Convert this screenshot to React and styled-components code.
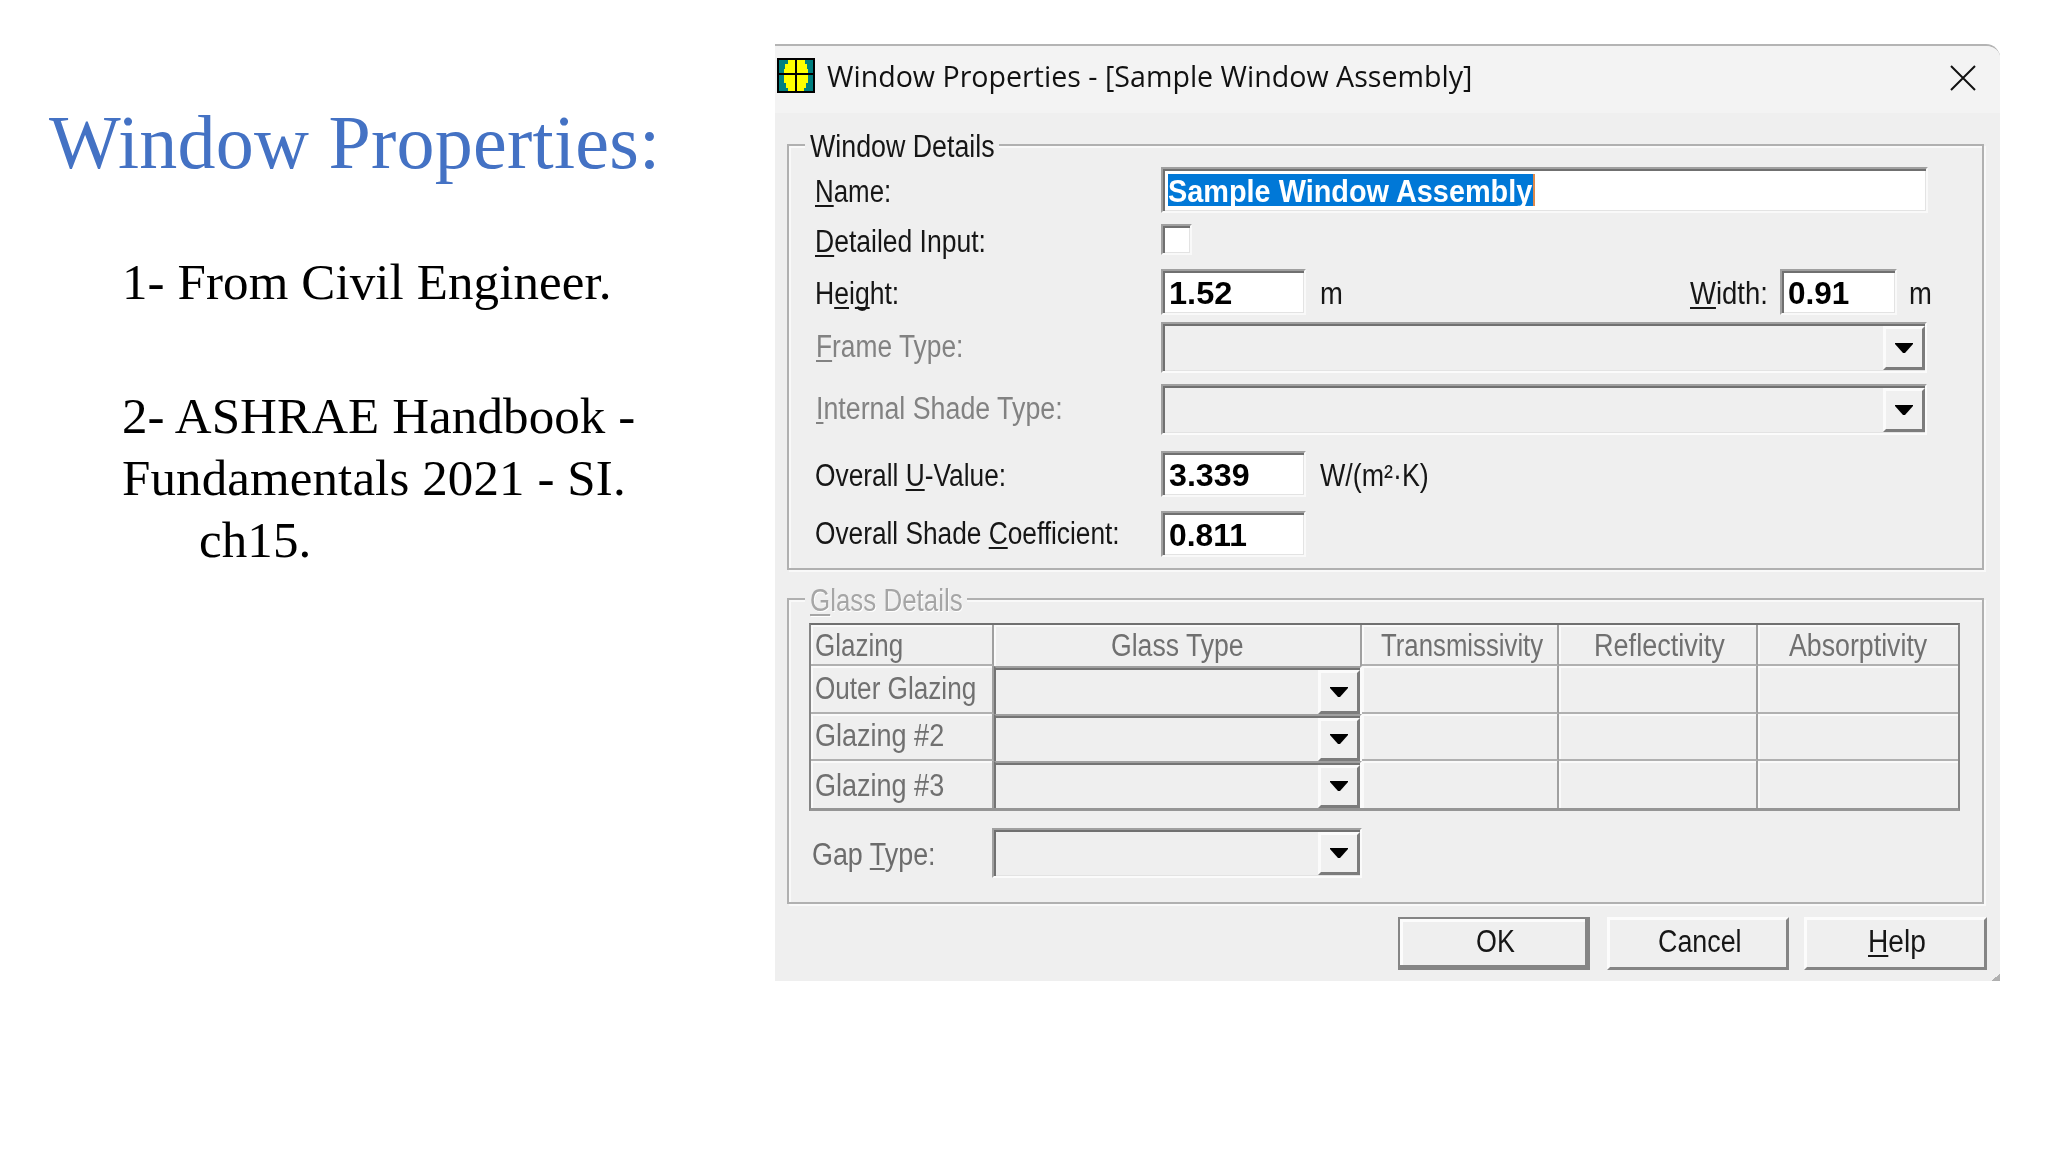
import { useLayoutEffect, useRef, useState } from "react";
import styled, { createGlobalStyle, css } from "styled-components";

// scales its text horizontally so that it fills the given width
function FitText({ width, children }) {
    const ref = useRef(null);
    const [scale, setScale] = useState(1);

    useLayoutEffect(() => {
        setScale(width / ref.current.offsetWidth);
    }, [width]);

    return (
        <FitBox $width={width}>
            <FitInner ref={ref} style={{ transform: `scaleX(${scale})` }}>
                {children}
            </FitInner>
        </FitBox>
    );
}

function Combo({ width, height, inCell }) {
    return (
        <ComboBox $width={width} $height={height} $inCell={inCell}>
            <ComboButton>
                <svg width="18" height="11" viewBox="0 0 18 11">
                    <path d="M0 0H18V1L10 10H8L0 1Z" fill="#000" />
                </svg>
            </ComboButton>
        </ComboBox>
    );
}

function WindowIcon() {
    return (
        <svg width="38" height="35" viewBox="0 0 38 35">
            <rect width="38" height="35" fill="#000" />
            <rect x="2" y="2" width="34" height="31" fill="#007f80" />
            <path
                d="M11 2H28V6H30V11H31V25H29V30H27V33H11V30H9V25H7V11H8V6H11Z"
                fill="#ffff00"
            />
            <path d="M19 0V35M0 16H38" stroke="#000" strokeWidth="2" />
        </svg>
    );
}

const glazingRows = [
    { name: "Outer Glazing", width: 161, shift: 4 },
    { name: "Glazing #2", width: 129, shift: 3 },
    { name: "Glazing #3", width: 129, shift: 6 },
];

export default function App() {
    return (
        <Slide>
            <GlobalStyle />
            <Notes>
                <Title>Window Properties:</Title>
                <Note>1- From Civil Engineer.</Note>
                <Note>
                    2- ASHRAE Handbook -<br />
                    Fundamentals 2021 - SI.
                    <Indented>ch15.</Indented>
                </Note>
            </Notes>

            <Dialog>
                <TitleBar>
                    <WindowIcon />
                    <Caption>
                        <FitText width={645}>
                            Window Properties - [Sample Window Assembly]
                        </FitText>
                    </Caption>
                    <svg width="26" height="26" viewBox="0 0 26 26">
                        <path
                            d="M1 1L25 25M25 1L1 25"
                            stroke="#111"
                            strokeWidth="2"
                        />
                    </svg>
                </TitleBar>

                <Body>
                    <Group $height={426}>
                        <Legend>
                            <FitText width={185}>Window Details</FitText>
                        </Legend>
                        <Row $gap={3}>
                            <Label>
                                <FitText width={76}>
                                    <u>N</u>ame:
                                </FitText>
                            </Label>
                            <Field $width={767}>
                                <Selection>
                                    <FitText width={364}>
                                        Sample Window Assembly
                                    </FitText>
                                </Selection>
                            </Field>
                        </Row>
                        <Row $gap={11}>
                            <Label $shift={-1}>
                                <FitText width={171}>
                                    <u>D</u>etailed Input:
                                </FitText>
                            </Label>
                            <Checkbox />
                        </Row>
                        <Row $gap={15}>
                            <Label>
                                <FitText width={84}>
                                    H<u>e</u>i<u>g</u>ht:
                                </FitText>
                            </Label>
                            <Field $width={145}>
                                <FitText width={63}>1.52</FitText>
                            </Field>
                            <Unit>
                                <FitText width={23}>m</FitText>
                            </Unit>
                            <WidthLabel>
                                <FitText width={78}>
                                    <u>W</u>idth:
                                </FitText>
                            </WidthLabel>
                            <Field $width={117}>
                                <FitText width={61}>0.91</FitText>
                            </Field>
                            <Unit $tight>
                                <FitText width={23}>m</FitText>
                            </Unit>
                        </Row>
                        <Row $gap={7}>
                            <Label $disabled>
                                <FitText width={147}>
                                    <u>F</u>rame Type:
                                </FitText>
                            </Label>
                            <Combo width={766} height={51} />
                        </Row>
                        <Row $gap={11}>
                            <Label $disabled>
                                <FitText width={247}>
                                    <u>I</u>nternal Shade Type:
                                </FitText>
                            </Label>
                            <Combo width={766} height={51} />
                        </Row>
                        <Row $gap={16}>
                            <Label>
                                <FitText width={191}>
                                    Overall <u>U</u>-Value:
                                </FitText>
                            </Label>
                            <Field $width={145}>
                                <FitText width={81}>3.339</FitText>
                            </Field>
                            <Unit>
                                <FitText width={109}>W/(m²·K)</FitText>
                            </Unit>
                        </Row>
                        <Row $gap={14}>
                            <Label $shift={4}>
                                <FitText width={305}>
                                    Overall Shade <u>C</u>oefficient:
                                </FitText>
                            </Label>
                            <Field $width={145}>
                                <FitText width={78}>0.811</FitText>
                            </Field>
                        </Row>
                    </Group>

                    <Group $height={306} $gap={28}>
                        <Legend $disabled>
                            <FitText width={153}>
                                <u>G</u>lass Details
                            </FitText>
                        </Legend>
                        <GlassTable>
                            <NameCell $shift={2}>
                                <FitText width={88}>Glazing</FitText>
                            </NameCell>
                            <HeadCell $bare>
                                <FitText width={133}>Glass Type</FitText>
                            </HeadCell>
                            <HeadCell $indent={5}>
                                <FitText width={162}>Transmissivity</FitText>
                            </HeadCell>
                            <HeadCell $indent={4}>
                                <FitText width={131}>Reflectivity</FitText>
                            </HeadCell>
                            <HeadCell>
                                <FitText width={138}>Absorptivity</FitText>
                            </HeadCell>
                            {glazingRows.map((row) => (
                                <GlazingRow key={row.name} {...row} />
                            ))}
                        </GlassTable>
                        <Row $gap={17}>
                            <GapLabel>
                                <FitText width={124}>
                                    Gap <u>T</u>ype:
                                </FitText>
                            </GapLabel>
                            <Combo width={370} height={50} />
                        </Row>
                    </Group>

                    <Footer>
                        <Button $width={192} $primary>
                            <FitText width={39}>OK</FitText>
                        </Button>
                        <Button $width={182}>
                            <FitText width={84}>Cancel</FitText>
                        </Button>
                        <Button $width={183}>
                            <FitText width={58}>
                                <u>H</u>elp
                            </FitText>
                        </Button>
                    </Footer>
                </Body>
                <Grip />
            </Dialog>
        </Slide>
    );
}

function GlazingRow({ name, width, shift }) {
    return (
        <>
            <NameCell $shift={shift}>
                <FitText width={width}>{name}</FitText>
            </NameCell>
            <Combo inCell />
            <Cell />
            <Cell />
            <Cell />
        </>
    );
}

const GlobalStyle = createGlobalStyle`
    * {
        box-sizing: border-box;
    }
    body {
        margin: 0;
        background: #fff;
    }
    svg {
        display: block;
        flex-shrink: 0;
    }
    u {
        text-decoration-thickness: 2px;
        text-underline-offset: 3px;
        text-decoration-skip-ink: none;
    }
`;

const FitBox = styled.span`
    display: inline-block;
    width: ${(p) => p.$width}px;
    white-space: nowrap;
    text-align: left;
`;

const FitInner = styled.span`
    display: inline-block;
    transform-origin: 0 0;
`;

const Slide = styled.div`
    display: flex;
    align-items: flex-start;
    width: 2048px;
    height: 1152px;
    overflow: hidden;
    background: #fff;
    font-family: "Liberation Sans", Arial, sans-serif;
`;

const Notes = styled.section`
    width: 775px;
    padding: 98px 0 0 122px;
    font-family: "Liberation Serif", "Times New Roman", serif;
`;

const Title = styled.h1`
    margin: 0 0 65px -73px;
    font-size: 76px;
    font-weight: 400;
    letter-spacing: 0.25px;
    line-height: 88px;
    color: #4472c4;
    white-space: nowrap;
`;

const Note = styled.p`
    margin: 0 0 72px;
    font-size: 51px;
    letter-spacing: 0.1px;
    line-height: 62px;
    color: #000;
    white-space: nowrap;
`;

const Indented = styled.span`
    display: block;
    padding-left: 77px;
`;

const Dialog = styled.section`
    position: relative;
    width: 1225px;
    height: 937px;
    margin-top: 44px;
    border-top: 2px solid #b4b4b4;
    border-top-right-radius: 14px;
    background: #efefef;
    overflow: hidden;
    font-size: 31px;
    line-height: 38px;
    color: #161616;
`;

const TitleBar = styled.header`
    display: flex;
    align-items: flex-start;
    height: 67px;
    padding: 12px 24px 0 2px;
    background: #f3f3f3;
    & > svg:last-child {
        margin: 7px 0 0 auto;
    }
`;

const Caption = styled.div`
    margin: -1px 0 0 12px;
    font-family: "Open Sans", "Segoe UI", sans-serif;
    font-size: 29px;
    color: #111;
`;

const Body = styled.div`
    padding: 31px 12px 0;
`;

const Group = styled.div`
    width: 1197px;
    height: ${(p) => p.$height}px;
    margin-top: ${(p) => p.$gap || 0}px;
    border: 2px solid #b0b0b0;
    box-shadow: inset 2px 2px 0 #f9f9f9, 2px 2px 0 #f9f9f9;
`;

const Legend = styled.div`
    width: fit-content;
    height: 36px;
    margin: -18px 0 0 16px;
    padding: 0 4px 0 5px;
    background: #efefef;
    ${(p) =>
        p.$disabled &&
        css`
            color: #a6a6a6;
            text-shadow: 1px 1px 0 #fff;
        `}
`;

const Row = styled.div`
    display: flex;
    align-items: flex-start;
    margin-top: ${(p) => p.$gap}px;
`;

const Label = styled.div`
    width: 372px;
    height: 36px;
    margin: ${(p) => p.$shift ?? 6}px 0 -6px;
    padding-left: ${(p) => (p.$disabled ? 27 : 26)}px;
    color: ${(p) => (p.$disabled ? "#828282" : "inherit")};
`;

const GapLabel = styled(Label)`
    width: 203px;
    margin-top: 8px;
    padding-left: 23px;
    color: #6c6c6c;
`;

const WidthLabel = styled.div`
    height: 36px;
    margin: 6px 12px 0 auto;
`;

const Unit = styled.div`
    height: 36px;
    margin: 6px 0 0 14px;
    ${(p) =>
        p.$tight &&
        css`
            margin: 6px 50px 0 12px;
        `}
`;

const Field = styled.div`
    width: ${(p) => p.$width}px;
    height: 46px;
    padding: 4px 0 0 6px;
    border: 2px solid;
    border-color: #a0a0a0 #f9f9f9 #f9f9f9 #a0a0a0;
    background: #fff;
    box-shadow: inset 2px 2px 0 #707070, inset -1px -1px 0 #e3e3e3;
    font-weight: 700;
    color: #000;
`;

const Selection = styled.div`
    width: fit-content;
    height: 32px;
    margin: 1px 0 0 -1px;
    padding-right: 1px;
    border-right: 2px solid #e08a4a;
    background: #0078d7;
    line-height: 36px;
    color: #fff;
`;

const Checkbox = styled.div`
    width: 31px;
    height: 31px;
    margin-bottom: -1px;
    border: 2px solid;
    border-color: #a0a0a0 #f9f9f9 #f9f9f9 #a0a0a0;
    background: #fff;
    box-shadow: inset 2px 2px 0 #707070, inset -1px -1px 0 #e3e3e3;
`;

const ComboBox = styled.div`
    display: flex;
    justify-content: flex-end;
    width: ${(p) => p.$width}px;
    height: ${(p) => p.$height}px;
    padding: 2px 0 1px 2px;
    border: 2px solid;
    border-color: #a0a0a0 #fbfbfb #fbfbfb #a0a0a0;
    box-shadow: inset 2px 2px 0 #707070, inset -1px -1px 0 #e3e3e3;
    ${(p) =>
        p.$inCell &&
        css`
            width: auto;
            height: auto;
            padding: 2px 0 0;
            border-width: 2px 2px 0;
            box-shadow: inset 0 2px 0 #747474;
            border-left-color: #747474;
        `}
`;

const ComboButton = styled.div`
    display: flex;
    align-items: center;
    justify-content: center;
    width: 42px;
    padding-right: 1px;
    border: 3px solid;
    border-color: #fbfbfb #7c7c7c #7c7c7c #fbfbfb;
    background: #f0f0f0;
`;

const GlassTable = styled.div`
    display: grid;
    grid-template-columns: 183px 368px 197px 199px 200px;
    grid-template-rows: 41px 48px 47px 47px;
    width: 1151px;
    margin: 5px 0 0 20px;
    border: 2px solid #858585;
    border-top-color: #707070;
    border-bottom: 3px solid #959595;
    color: #707070;
`;

const Cell = styled.div`
    border-right: 2px solid #a0a0a0;
    border-bottom: 2px solid #b0b0b0;
    box-shadow: inset 2px 2px 0 #fafafa;
    &:nth-child(5n) {
        border-right: 0;
    }
    &:nth-last-child(-n + 5) {
        border-bottom: 0;
    }
`;

const NameCell = styled(Cell)`
    padding: ${(p) => p.$shift}px 0 0 4px;
`;

const HeadCell = styled(Cell)`
    padding: 2px 0 0 ${(p) => p.$indent || 0}px;
    text-align: center;
    ${(p) =>
        p.$bare &&
        css`
            border-bottom: 0;
        `}
`;

const Footer = styled.footer`
    display: flex;
    justify-content: flex-end;
    margin-top: 13px;
    padding-right: 1px;
    & > :nth-child(2) {
        margin: 0 15px 0 17px;
    }
`;

const Button = styled.div`
    width: ${(p) => p.$width}px;
    height: 53px;
    padding: 3px 0 0 3px;
    border: 3px solid;
    border-color: #fcfcfc #858585 #858585 #fcfcfc;
    text-align: center;
    ${(p) =>
        p.$primary &&
        css`
            border: 2px solid #858585;
            padding-top: 4px;
            box-shadow: inset -3px -3px 0 #858585, inset 3px 3px 0 #fcfcfc;
        `}
`;

const Grip = styled.div`
    position: absolute;
    right: 0;
    bottom: 0;
    width: 9px;
    height: 7px;
    background: linear-gradient(to bottom right, transparent 50%, #b0b0b0 50%);
`;
